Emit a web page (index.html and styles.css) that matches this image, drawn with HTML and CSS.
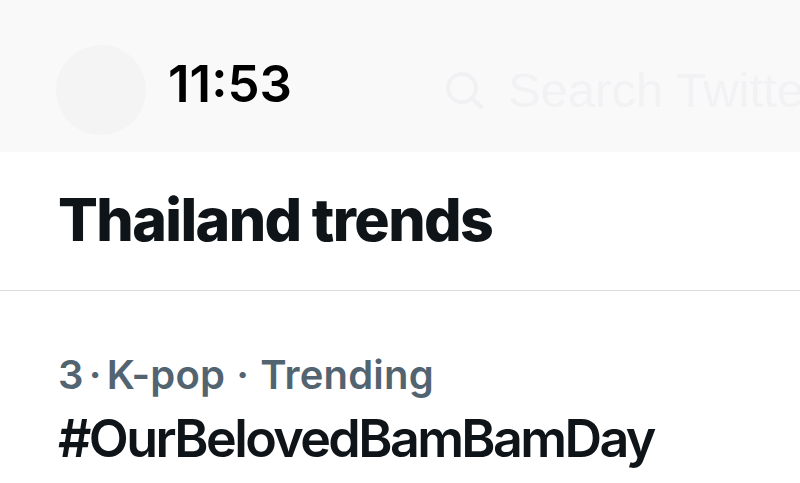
FILE: index.html
```html
<!DOCTYPE html>
<html>
<head>
<meta charset="utf-8">
<link rel="stylesheet" href="styles.css">
</head>
<body>
<div class="topbar">
  <div class="avatar"></div>
  <div class="time">11:53</div>
  <div class="search">
    <svg class="search-icon" width="40" height="40" viewBox="0 0 40 40"><circle cx="18" cy="18" r="14" fill="none" stroke="#f1f1f3" stroke-width="4"/><line x1="28" y1="28" x2="37" y2="37" stroke="#f1f1f3" stroke-width="4" stroke-linecap="round"/></svg>
    <span class="search-text">Search Twitter</span>
  </div>
</div>
<div class="heading">
  <h1 class="title">Thailand trends</h1>
</div>
<div class="trend">
  <div class="meta">3<span class="dot">·</span>K-pop<span class="dot wide">·</span>Trending</div>
  <div class="tag">#OurBelovedBamBamDay</div>
</div>
</body>
</html>
```
FILE: styles.css
```css
html, body {
  margin: 0;
  padding: 0;
  background: #ffffff;
  font-family: "Inter", "Liberation Sans", sans-serif;
  overflow: hidden;
}
.topbar {
  height: 152px;
  background: #f9f9fa;
  display: flex;
  align-items: center;
  overflow: hidden;
  white-space: nowrap;
}
.avatar {
  width: 90px;
  height: 90px;
  border-radius: 50%;
  background: #f4f4f5;
  margin-left: 56px;
  flex: none;
  margin-top: 28px;
}
.time {
  margin-left: 22px;
  font-size: 51px;
  font-weight: 600;
  color: #000000;
  letter-spacing: 0;
  margin-top: 14px;
}
.search {
  margin-left: 152px;
  display: flex;
  align-items: center;
  margin-top: 28px;
}
.search-icon {
  flex: none;
}
.search-text {
  margin-left: 24px;
  font-size: 49px;
  color: #f2f2f4;
  font-family: "Liberation Sans", sans-serif;
}
.heading {
  height: 138px;
  border-bottom: 1px solid #dcdcdc;
  display: flex;
  align-items: center;
  padding-left: 58px;
}
.title {
  margin: 0;
  font-size: 59px;
  font-weight: 800;
  color: #0f1419;
  letter-spacing: -1.6px;
  margin-top: -4px;
}
.trend {
  padding: 58px 58px 0;
}
.meta {
  font-size: 40px;
  font-weight: 600;
  color: #536471;
  line-height: 52px;
  letter-spacing: 0.2px;
}
.dot {
  margin: 0 5px;
}
.dot.wide {
  margin: 0 11px;
}
.tag {
  font-size: 52px;
  font-weight: 600;
  color: #0f1419;
  line-height: 62px;
  letter-spacing: -2.6px;
  margin-top: 7px;
}
```
